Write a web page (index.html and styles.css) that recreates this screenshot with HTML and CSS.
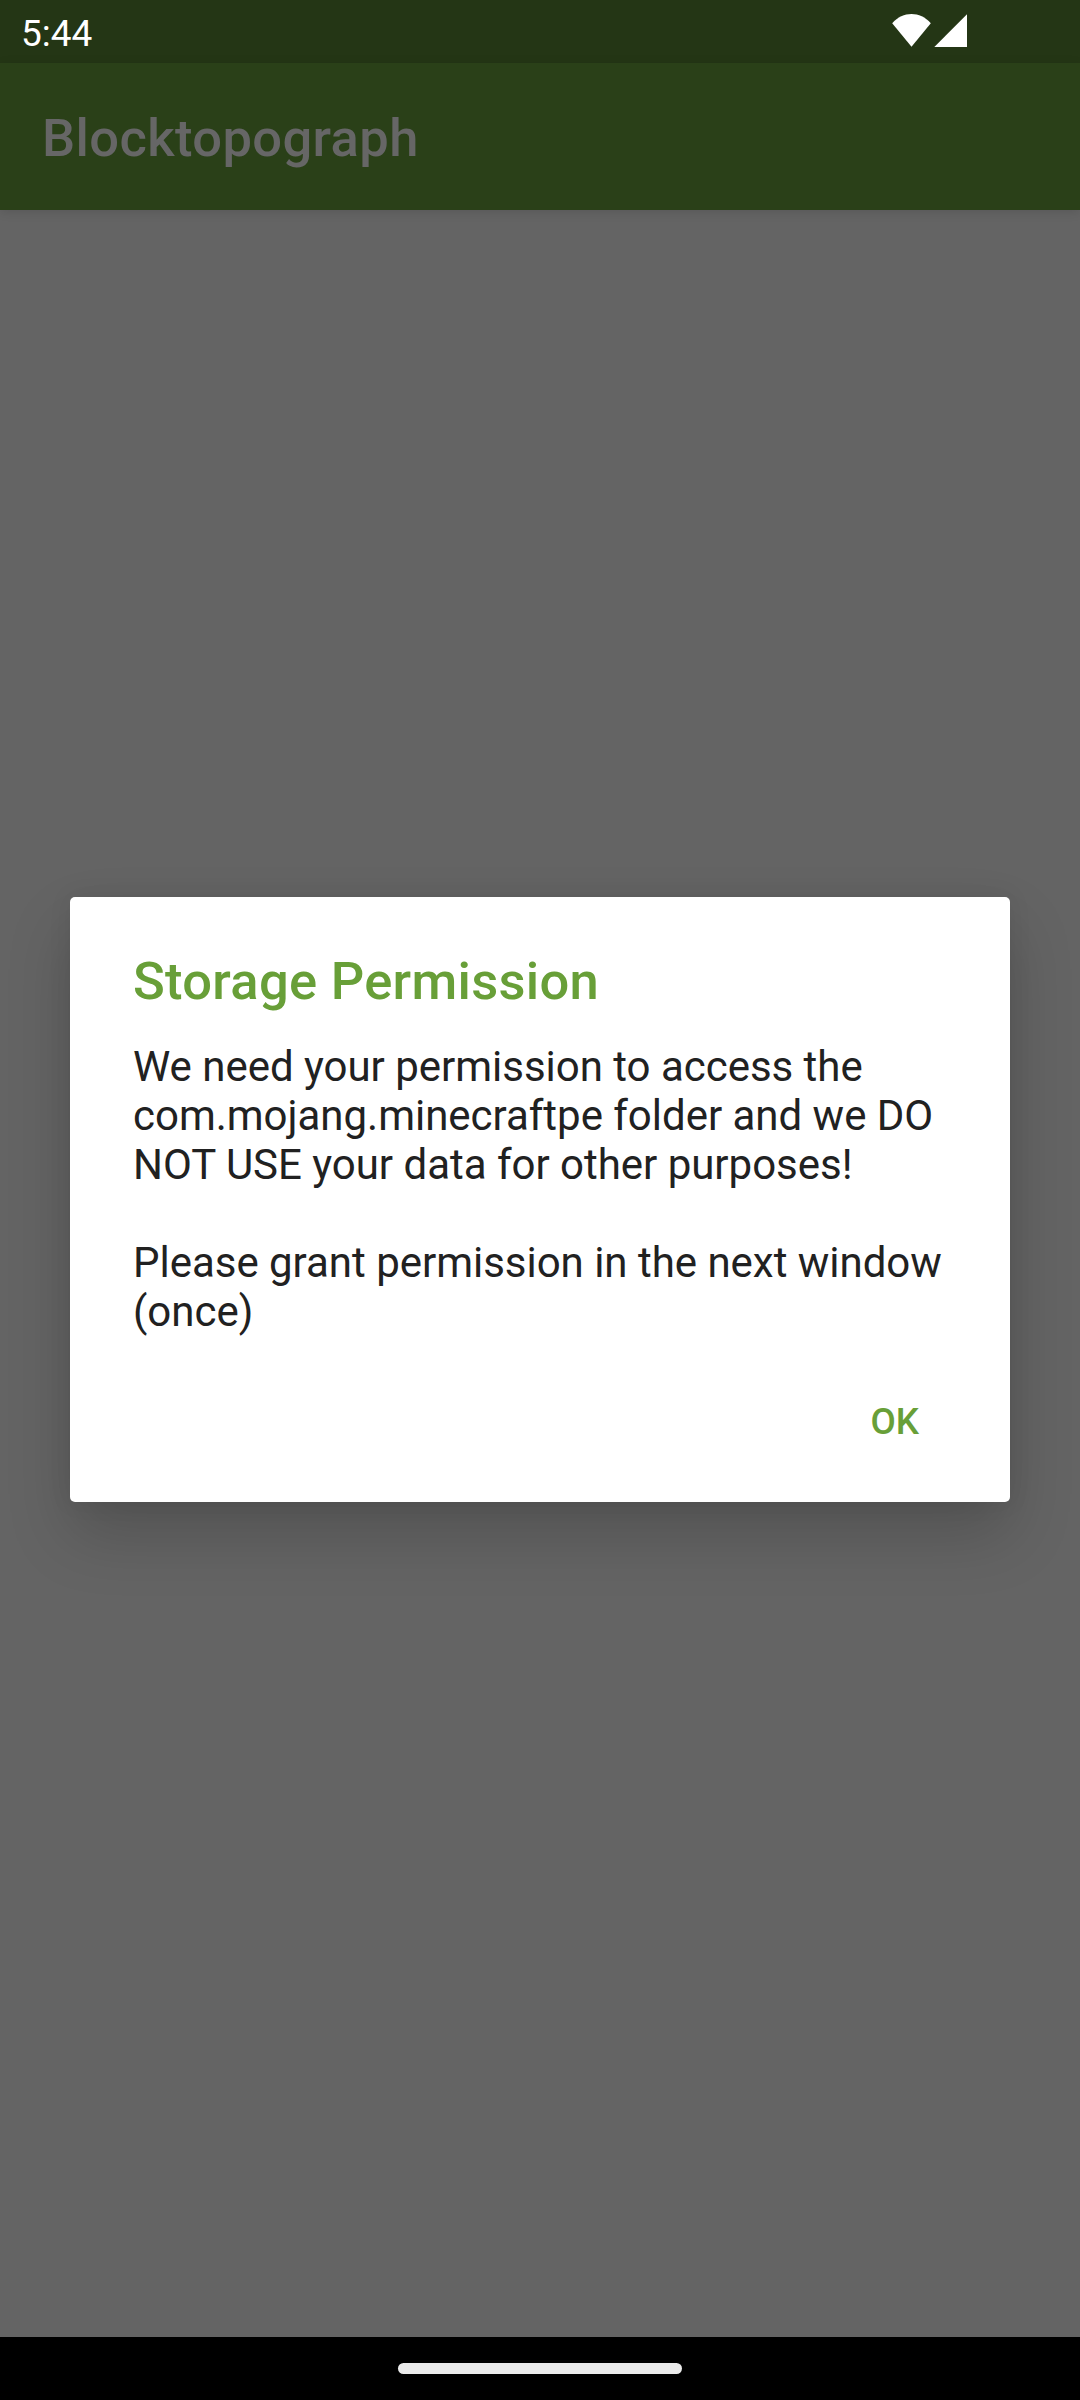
FILE: index.html
```html
<!DOCTYPE html>
<html lang="en">
<head>
<meta charset="utf-8">
<title>Blocktopograph</title>
<link rel="stylesheet" href="styles.css">
</head>
<body>
<div class="screen">
  <header class="status-bar">
    <span class="time">5:44</span>
    <svg class="status-icons" width="76" height="34" viewBox="0 0 76 34" fill="#fff" aria-hidden="true">
      <path d="M0.2 9.2C11 -3 28 -3 38.8 9.2L19.5 32.7Z"/>
      <path d="M42.3 33H75V0.3Z"/>
    </svg>
  </header>
  <div class="app-bar"><h1 class="app-title">Blocktopograph</h1></div>
  <main class="content">
    <section class="dialog" role="dialog" aria-labelledby="dialog-title">
      <h2 class="dialog-title" id="dialog-title">Storage Permission</h2>
      <p class="message">We need your permission to access the<br>com.mojang.minecraftpe folder and we DO<br>NOT USE your data for other purposes!</p>
      <p class="message">Please grant permission in the next window<br>(once)</p>
      <div class="actions"><button class="action" type="button">OK</button></div>
    </section>
  </main>
  <footer class="nav-bar"><div class="nav-handle"></div></footer>
</div>
</body>
</html>
```
FILE: styles.css
```css
* {
  box-sizing: border-box;
}

body {
  margin: 0;
  font-family: Roboto, sans-serif;
}

.screen {
  display: flex;
  flex-direction: column;
  width: 1080px;
  height: 2400px;
  background: #646464;
  overflow: hidden;
}

.status-bar {
  display: flex;
  flex: none;
  justify-content: space-between;
  height: 63px;
  padding: 0 112px 0 21px;
  background: #243615;
  color: #fff;
}

.time {
  padding-top: 12px;
  font-size: 37px;
  line-height: 44px;
}

.status-icons {
  display: block;
  width: 76px;
  margin-top: 14px;
}

.app-bar {
  flex: none;
  height: 147px;
  padding: 44px 42px 0;
  background: #2a4018;
  box-shadow: 0 2px 10px rgba(0, 0, 0, 0.12);
}

.app-title {
  margin: 0;
  color: #666;
  font-size: 52.5px;
  font-weight: 500;
  line-height: 62px;
  letter-spacing: 0.38px;
}

.content {
  flex: 1;
  padding: 687px 70px 0;
}

.dialog {
  height: 605px;
  padding: 53px 63px 0;
  border-radius: 5px;
  background: #fff;
  box-shadow: 0 32px 64px rgba(0, 0, 0, 0.18), 0 0 24px rgba(0, 0, 0, 0.07);
}

.dialog-title {
  margin: 0 0 30px;
  color: #689f38;
  font-size: 52.5px;
  font-weight: 500;
  line-height: 62px;
  letter-spacing: 0.3px;
}

.message {
  margin: 0 0 49px;
  color: #212121;
  font-size: 42px;
  line-height: 49px;
  letter-spacing: -0.02px;
  white-space: nowrap;
}

.actions {
  display: flex;
  justify-content: flex-end;
  margin-top: 64px;
  padding-right: 28px;
}

.action {
  height: 43px;
  padding: 0;
  border: 0;
  background: none;
  color: #689f38;
  font: 500 36.75px/43px Roboto, sans-serif;
}

.nav-bar {
  display: flex;
  flex: none;
  justify-content: center;
  height: 63px;
  padding-top: 26px;
  background: #000;
}

.nav-handle {
  width: 284px;
  height: 11px;
  border-radius: 6px;
  background: #ebebeb;
}
```
